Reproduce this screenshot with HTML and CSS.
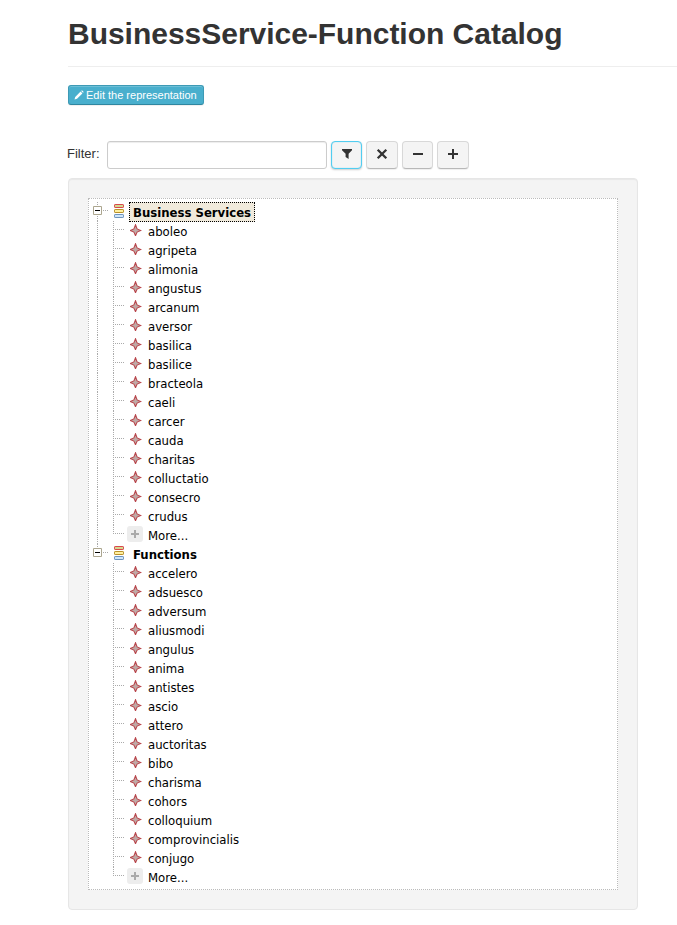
FILE: index.html
```html
<!DOCTYPE html>
<html lang="en">
<head>
<meta charset="utf-8">
<title>BusinessService-Function Catalog</title>
<link rel="stylesheet" href="styles.css">
</head>
<body>
<svg width="0" height="0" class="defs">
  <symbol id="star" viewBox="0 0 12 12"><path d="M5.5 .8 7.1 4.9 10.7 6.5 7.1 8.1 5.5 11.7 3.9 8.1 .3 6.5 3.9 4.9Z" fill="#c0aaa7" stroke="#b9474d" stroke-width="1.1"/></symbol>
  <symbol id="stack" viewBox="0 0 10 14"><rect x=".5" y=".5" width="9" height="3" rx=".6" fill="#d5d890" stroke="#d9474c"/><rect x=".5" y="5.5" width="9" height="3" rx=".6" fill="#fff0a0" stroke="#b8902a"/><rect x=".5" y="10.5" width="9" height="3" rx=".6" fill="#cfe6fb" stroke="#6d93bd"/></symbol>
  <symbol id="toggle" viewBox="0 0 9 9"><path d="M.5.5h8v8h-8z" fill="#fff" stroke="#aca68f"/><path d="M2 4.5h5" stroke="#000"/></symbol>
  <symbol id="more" viewBox="0 0 16 16"><rect width="16" height="16" rx="3" fill="#ededed"/><path d="M8 4v8M4 8h8" stroke="#aaa" stroke-width="2"/></symbol>
</svg>
<main class="page">
  <h1>BusinessService-Function Catalog</h1>
  <a class="edit"><svg width="10" height="10" viewBox="0 0 10 10"><path d="M.5 9.5 1.2 7 6.6 1.6 8.4 3.4 3 8.8ZM7.2 1 8 .3 9.7 2 9 2.8Z" fill="#fff"/></svg><span>Edit the representation</span></a>
  <div class="filter">
    <label for="q">Filter:</label>
    <input id="q" type="text">
    <button class="btn active"><svg width="12" height="12" viewBox="0 0 12 12"><path d="M1 1h10v1.3L7.6 5.8V11L4.6 9V5.8L1 2.3Z" fill="#333"/></svg></button>
    <button class="btn wide"><svg width="12" height="12" viewBox="0 0 12 12"><path d="m1.7 1.7 8.6 8.6M10.3 1.7 1.7 10.3" stroke="#333" stroke-width="2.3"/></svg></button>
    <button class="btn"><svg width="12" height="12" viewBox="0 0 12 12"><path d="M1 6h10" stroke="#333" stroke-width="2"/></svg></button>
    <button class="btn wide"><svg width="12" height="12" viewBox="0 0 12 12"><path d="M1 6h10M6 1v10" stroke="#333" stroke-width="2"/></svg></button>
  </div>
  <section class="well"><div class="tree" id="tree"></div></section>
</main>
<script src="tree.js"></script>
</body>
</html>
```
FILE: styles.css
```css
* { box-sizing: border-box; }
body { margin: 0; background: #fff; color: #333; font: 13px/18px "Liberation Sans", Arial, sans-serif; overflow: hidden; }
.defs { display: block; }
.page { padding-left: 68px; }
h1 { margin: 0 0 18px; height: 67px; padding-top: 16px; border-bottom: 1px solid #eee; font-size: 30px; line-height: 36px; font-weight: bold; letter-spacing: -.02px; white-space: nowrap; }
.edit { display: flex; align-items: center; gap: 2px; width: 136px; height: 20px; padding: 0 6px; border: 1px solid #3d9ab5; border-bottom-color: #2f86a0; border-radius: 3px; background: #49afcd; color: #fff; font-size: 11px; white-space: nowrap; box-shadow: inset 0 1px 0 #6dbfd7, 0 1px 1px #0001; }
.edit svg { margin-left: -1px; }
.filter { display: flex; align-items: center; height: 28px; margin: 36px 0 9px -1px; }
.filter label { width: 40px; margin-top: -3px; }
.filter input { width: 220px; height: 28px; margin: 0 4px 0 0; border: 1px solid #ccc; border-radius: 3px; box-shadow: inset 0 1px 1px #00000013; }
.btn { display: flex; align-items: center; justify-content: center; width: 31px; height: 28px; margin: 0 4px 0 0; padding: 0 0 2px; border: 1px solid #d8d8d8; border-bottom-color: #b8b8b8; border-radius: 4px; background: #f4f4f4; box-shadow: 0 1px 1px #0001; }
.btn.wide { width: 32px; }
.btn.active { border: 1px solid #52cdf0; box-shadow: inset 0 0 1px #52cdf0, 0 1px 2px #0003; }
.well { width: 570px; height: 732px; padding: 19px; border: 1px solid #e6e6e6; border-radius: 4px; background: #f4f4f4; box-shadow: inset 0 1px 1px #0000000d; }
.tree { width: 530px; height: 692px; padding: 3px 0 0 4px; border: 1px dotted #bbb; background: #fff; color: #000; font: 13px/19px "DejaVu Sans Condensed", "DejaVu Sans", sans-serif; font-stretch: condensed; }
.row { display: flex; align-items: center; height: 19px; white-space: nowrap; }
.row svg { display: block; flex: none; }
.spine { width: 20px; height: 19px; flex: none; }
.spine.on { background: repeating-linear-gradient(#aaa 0 1px, transparent 1px 2px) 4px 0 / 1px 100% no-repeat; }
.branch { width: 12px; height: 19px; flex: none; background: repeating-linear-gradient(#aaa 0 1px, transparent 1px 2px) 0 0 / 1px 100% no-repeat, repeating-linear-gradient(90deg, #aaa 0 1px, transparent 1px 2px) 0 8px / 12px 1px no-repeat; }
.branch.last { background-size: 1px 9px, 12px 1px; }
.star { margin: -1px 6px 0 5px; }
.more { margin: -2px 5px 0 2px; }
.leaf { padding: 1px 0 0; }
.toggle { width: 21px; height: 19px; flex: none; padding-top: 4px; background: repeating-linear-gradient(90deg, #aaa 0 1px, transparent 1px 2px) 10px 8px / 5px 1px no-repeat, repeating-linear-gradient(#aaa 0 1px, transparent 1px 2px) 4px 0 / 1px 100% no-repeat; }
.toggle.end { background-size: 5px 1px, 1px 5px; }
.stack { margin-top: -2px; }
.name { height: 20px; margin-left: 5px; padding: 0 3px; border: 1px solid transparent; line-height: 19px; font-weight: bold; }
.name.selected { border: 1px dotted #000; background: #f0eadc; }
```
FILE: tree.js
```js
const groups = [
  ["Business Services", "aboleo agripeta alimonia angustus arcanum aversor basilica basilice bracteola caeli carcer cauda charitas colluctatio consecro crudus More..."],
  ["Functions", "accelero adsuesco adversum aliusmodi angulus anima antistes ascio attero auctoritas bibo charisma cohors colloquium comprovincialis conjugo More..."]
];
const icon = (id, w, h) => `<svg class="${id}" width="${w}" height="${h}"><use href="#${id}"/></svg>`;
document.getElementById("tree").innerHTML = groups.map(([name, items], g) => {
  const head = `<div class="row"><span class="toggle${g ? " end" : ""}"><svg width="9" height="9"><use href="#toggle"/></svg></span>${icon("stack", 10, 14)}<span class="name${g ? "" : " selected"}">${name}</span></div>`;
  return head + items.split(" ").map(t => {
    const more = t === "More...";
    return `<div class="row"><span class="spine${g ? "" : " on"}"></span><span class="branch${more ? " last" : ""}"></span>${more ? icon("more", 16, 16) : icon("star", 12, 12)}<span class="leaf">${t}</span></div>`;
  }).join("");
}).join("");
```
